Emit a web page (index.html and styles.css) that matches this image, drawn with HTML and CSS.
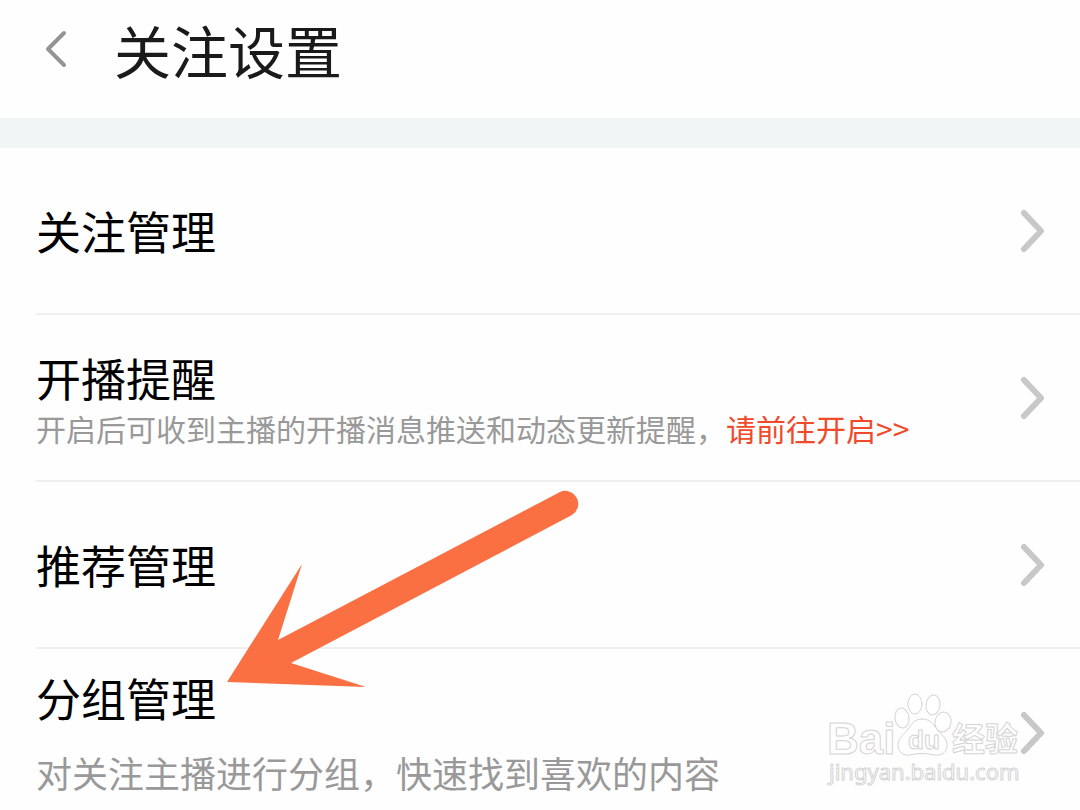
FILE: index.html
```html
<!DOCTYPE html>
<html lang="zh-CN">
	<head>
		<meta charset="UTF-8" />
		<meta name="viewport" content="width=device-width, initial-scale=1.0" />
		<title>关注设置</title>
		<link rel="stylesheet" href="styles.css">
	</head>
	<body>
		<header class="topbar">
			<button type="button" class="back" aria-label="返回">
				<svg width="24" height="40" viewBox="0 0 24 40">
					<path d="M20 4L4 20l16 16" />
				</svg>
			</button>
			<h1 class="title">关注设置</h1>
		</header>
		<main class="content">
			<ul class="settings">
				<li class="row">
					<div class="text">
						<h2 class="name" id="follow">关注管理</h2>
					</div>
					<button type="button" class="more" aria-labelledby="follow">
						<svg width="26" height="44" viewBox="0 0 26 44">
							<path d="M4 4l17 18L4 40" />
						</svg>
					</button>
				</li>
				<li class="row">
					<div class="text">
						<h2 class="name" id="live">开播提醒</h2>
						<p class="hint">开启后可收到主播的开播消息推送和动态更新提醒，<a class="enable" href="#">请前往开启&gt;&gt;</a></p>
					</div>
					<button type="button" class="more" aria-labelledby="live">
						<svg width="26" height="44" viewBox="0 0 26 44">
							<path d="M4 4l17 18L4 40" />
						</svg>
					</button>
				</li>
				<li class="row">
					<div class="text">
						<h2 class="name" id="recommend">推荐管理</h2>
					</div>
					<button type="button" class="more" aria-labelledby="recommend">
						<svg width="26" height="44" viewBox="0 0 26 44">
							<path d="M4 4l17 18L4 40" />
						</svg>
					</button>
				</li>
				<li class="row">
					<div class="text text-wide">
						<h2 class="name" id="group">分组管理</h2>
						<p class="hint hint-large">对关注主播进行分组，快速找到喜欢的内容</p>
					</div>
					<button type="button" class="more" aria-labelledby="group">
						<svg width="26" height="44" viewBox="0 0 26 44">
							<path d="M4 4l17 18L4 40" />
						</svg>
					</button>
					<svg class="watermark" width="200" height="110" viewBox="0 0 200 110">
						<text class="mark-bai" x="2" y="65">Bai</text>
						<ellipse cx="77" cy="29" rx="7" ry="10" transform="rotate(-8 77 29)" />
						<ellipse cx="90" cy="15" rx="7" ry="10" />
						<ellipse cx="108" cy="16" rx="7" ry="10" transform="rotate(8 108 16)" />
						<ellipse cx="118" cy="33" rx="8" ry="10" transform="rotate(12 118 33)" />
						<path d="M97 30c-7 0-10 4-13 9-4 6-11 9-11 17 0 7 5 11 12 10 8-2 16-2 24 0 8 1 13-3 13-10 0-8-7-11-11-17-4-6-7-9-14-9z" />
						<text class="mark-du" x="83" y="60">du</text>
						<text class="mark-cn" x="127" y="62">经验</text>
						<text class="mark-url" x="4" y="91">jingyan.baidu.com</text>
					</svg>
				</li>
			</ul>
			<!-- points at the group row -->
			<svg class="pointer" width="360" height="200" viewBox="0 0 360 200">
				<path d="M7 194L82 76 58 152 340 4A13 13 0 0 1 352 27L71 175 146 199z" />
			</svg>
		</main>
	</body>
</html>
```
FILE: styles.css
```css
body {
	margin: 0;
	background: #fefefe;
	color: #000;
	font-family: "Noto Sans CJK SC", sans-serif;
}

h1,
h2,
p,
ul {
	margin: 0;
	padding: 0;
	font-weight: 400;
}

button {
	display: flex;
	padding: 0;
	border: 0;
	background: none;
	cursor: pointer;
}

svg {
	fill: none;
	stroke-linecap: round;
	stroke-linejoin: round;
}

.topbar {
	display: flex;
	align-items: center;
	gap: 46px;
	padding: 9px 44px 29px;
	border-bottom: 30px solid #f1f5f6;
}

.back svg {
	stroke: #949494;
	stroke-width: 4px;
}

.title {
	color: #1a1a1a;
	font-size: 57px;
	line-height: 80px;
}

.content {
	position: relative;
}

.settings {
	list-style: none;
	padding-left: 36px;
}

.row {
	position: relative;
	display: flex;
	align-items: center;
	justify-content: space-between;
	box-sizing: border-box;
	min-height: 167px;
	padding-right: 34px;
	border-bottom: 2px solid #efefef;
}

.row:last-child {
	border-bottom: 0;
}

.name {
	font-size: 45px;
	line-height: 60px;
}

.hint {
	color: #999;
	font-size: 30px;
	line-height: 40px;
}

.hint-large {
	font-size: 36px;
}

.text-wide {
	display: grid;
	gap: 24px;
	padding-bottom: 6px;
}

.enable {
	color: #f04a2a;
	text-decoration: none;
}

.more svg {
	stroke: #c8c8c8;
	stroke-width: 6px;
}

/* arrow lies over the list */
.pointer {
	position: absolute;
	top: 340px;
	left: 220px;
	fill: #fa7042;
	pointer-events: none;
}

.watermark {
	position: absolute;
	top: 40px;
	right: 55px;
	fill: #fff;
	stroke: #d4d4d4;
	stroke-width: 1px;
	pointer-events: none;
}

.mark-bai,
.mark-du {
	font-family: "Liberation Sans", sans-serif;
	font-weight: 700;
}

.mark-bai {
	font-size: 44px;
}

.mark-du {
	font-size: 26px;
}

.mark-cn {
	font-size: 33px;
	font-weight: 700;
}

.mark-url {
	font-family: "Noto Sans", sans-serif;
	font-size: 22px;
}
```
